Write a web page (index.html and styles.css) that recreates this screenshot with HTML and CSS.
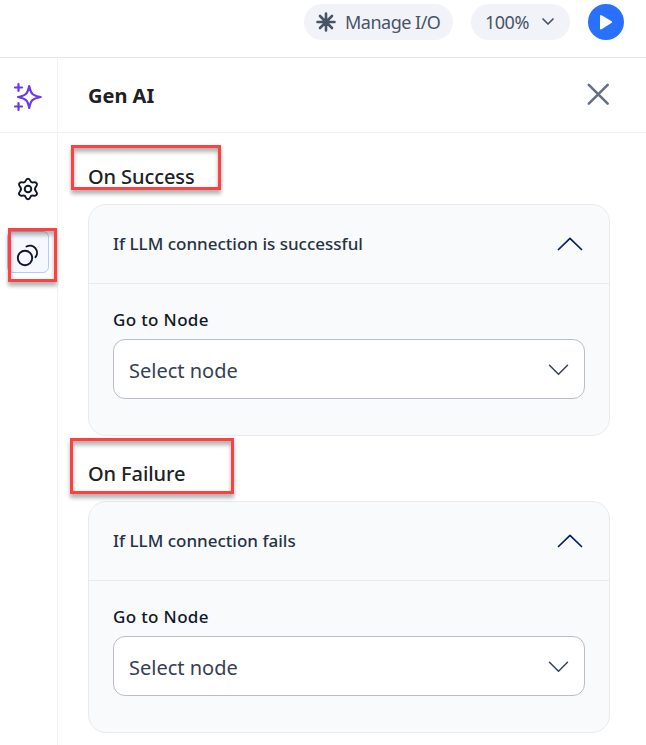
FILE: index.html
```
<!DOCTYPE html>
<html lang="en">
<head>
<meta charset="utf-8">
<title>Gen AI</title>
<link rel="stylesheet" href="styles.css">
</head>
<body>
<header class="topbar">
  <button class="pill manage">
    <svg width="20" height="20" viewBox="0 0 20 20"><path d="M10 1.500v17M1.500 10h17M4 4l12 12M16 4L4 16"/></svg>
    <span>Manage I/O</span>
  </button>
  <button class="pill scale">
    <span>100%</span>
    <svg width="14" height="10" viewBox="0 0 14 10"><path d="M2 2l5 5 5-5"/></svg>
  </button>
  <button class="play" aria-label="Run">
    <svg width="36" height="36" viewBox="0 0 36 36"><path d="M13 12v12.500L23.200 18z"/></svg>
  </button>
</header>
<div class="workspace">
  <nav class="rail">
    <div class="brand">
      <svg width="30" height="30" viewBox="0 0 30 30"><path d="M16.200 4C17.800 11.500 19 13.300 27.700 15C19 16.700 17.800 18.500 16.200 26C14.600 18.500 13.300 16.700 5 15C13.300 13.300 14.600 11.500 16.200 4ZM5.500 2v7M2 5.500h7M5.500 21v7M2 24.500h7"/></svg>
    </div>
    <div class="rail-item">
      <svg width="24" height="24" viewBox="0 0 24 24"><path d="M12 1.800c1.300 0 1.900.8 2.300 2 .5 1.500 1.400 1.900 2.900 1.600 1.500-.4 2.900-.2 3.600 1 .6 1.200.1 2.200-.8 3.200-1.300 1.500-1.300 3.300 0 4.800.9 1 1.400 2 .8 3.200-.7 1.200-2.100 1.400-3.600 1-1.500-.3-2.400.1-2.900 1.600-.4 1.200-1 2-2.300 2s-1.900-.8-2.300-2c-.5-1.500-1.400-1.900-2.900-1.600-1.500.4-2.900.2-3.600-1-.6-1.200-.1-2.200.8-3.200 1.300-1.500 1.300-3.300 0-4.800-.9-1-1.400-2-.8-3.200.7-1.200 2.100-1.400 3.600-1 1.500.3 2.400-.1 2.900-1.600.4-1.200 1-2 2.300-2z"/><circle cx="12" cy="12" r="3.300"/></svg>
    </div>
    <div class="rail-item active">
      <svg width="24" height="26" viewBox="0 0 24 26"><circle cx="9" cy="19" r="7.200"/><path d="M10.500 7.500a7.150 7.150 0 0 1 9 10.700"/></svg>
      <i class="mark mark-rail"></i>
    </div>
  </nav>
  <main class="panel">
    <div class="panel-head">
      <h1>Gen AI</h1>
      <svg class="close" width="24" height="24" viewBox="0 0 24 24"><path d="M2.800 2.800l18.900 18.900M21.700 2.800L2.800 21.700"/></svg>
    </div>
    <section class="group">
      <h2>On Success<i class="mark mark-success"></i></h2>
      <div class="card">
        <div class="card-head"><span>If LLM connection is successful</span>
          <svg width="26" height="16" viewBox="0 0 26 16"><path d="M1.500 13.500L13 2.300l11.500 11.200"/></svg></div>
        <div class="card-body">
          <label>Go to Node</label>
          <div class="select"><span>Select node</span>
            <svg width="20" height="12" viewBox="0 0 20 12"><path d="M1.500 1.200l9 9 9-9"/></svg></div>
        </div>
      </div>
    </section>
    <section class="group">
      <h2>On Failure<i class="mark mark-failure"></i></h2>
      <div class="card">
        <div class="card-head"><span>If LLM connection fails</span>
          <svg width="26" height="16" viewBox="0 0 26 16"><path d="M1.500 13.500L13 2.300l11.500 11.200"/></svg></div>
        <div class="card-body">
          <label>Go to Node</label>
          <div class="select"><span>Select node</span>
            <svg width="20" height="12" viewBox="0 0 20 12"><path d="M1.500 1.200l9 9 9-9"/></svg></div>
        </div>
      </div>
    </section>
  </main>
</div>
</body>
</html>
```
FILE: styles.css
```
* { box-sizing: border-box; }
body {
  margin: 0;
  height: 745px;
  overflow: hidden;
  background: #fff;
  color: #202124;
  font-family: "Noto Sans", "Open Sans", sans-serif;
}
svg { flex: none; overflow: visible; fill: none; stroke: currentColor; stroke-linecap: round; stroke-linejoin: round; }
h1, h2 { margin: 0; }
button { border: 0; font: inherit; padding: 0; }
span, label, h1 { white-space: nowrap; }

.topbar {
  display: flex;
  justify-content: flex-end;
  gap: 18px;
  height: 58px;
  padding: 4px 22px 0 0;
  border-bottom: 1px solid #e8e8eb;
}
.pill {
  display: flex;
  align-items: center;
  height: 36px;
  border-radius: 18px;
  background: #f2f3f8;
  color: #475467;
}
.manage { width: 149px; padding-left: 12px; gap: 9px; font-size: 18px; letter-spacing: -.5px; }
.manage svg { stroke-width: 2.6; }
.scale { width: 99px; padding-left: 14px; gap: 12px; font-size: 18px; letter-spacing: -.5px; }
.scale svg { stroke-width: 1.7; }
.play { width: 36px; height: 36px; border-radius: 50%; background: #2970ff; color: #fff; }
.play svg { display: block; fill: currentColor; stroke-width: 2; }

.workspace { display: flex; height: 687px; }
.rail { width: 58px; flex: none; border-right: 1px solid #f1f1f4; }
.brand {
  height: 75px;
  padding: 24px 0 0 13px;
  border-bottom: 1px solid #f1f1f4;
  color: #6938ef;
}
.brand svg { display: block; stroke-width: 2.2; }
.rail-item {
  position: relative;
  display: flex;
  align-items: center;
  justify-content: center;
  width: 42px;
  height: 42px;
  margin: 35px 0 0 7px;
  color: #101828;
}
.rail-item svg { stroke-width: 1.9; }
.rail-item + .rail-item { margin-top: 21px; }
.active { border: 1px solid #b2ccff; border-radius: 6px; background: #f5f8ff; }

.panel { flex: 1; }
.panel-head {
  display: flex;
  align-items: center;
  justify-content: space-between;
  height: 75px;
  padding: 0 36px 2px 30px;
  border-bottom: 1px solid #f1f1f4;
}
.close { color: #667085; stroke-width: 2.6; }
h1 { padding-top: 2px; font-size: 20px; font-weight: 700; }
.group { width: 522px; margin-left: 30px; }
.group h2 {
  position: relative;
  height: 65px;
  padding-top: 24px;
  font-size: 20px;
  line-height: 28px;
  font-weight: 500;
  letter-spacing: -.1px;
}
.group:nth-of-type(1) h2 { height: 71px; padding-top: 30px; }
.card { height: 232px; border: 1px solid #e8eaee; border-radius: 18px; background: #f9fafc; }
.card-head {
  display: flex;
  align-items: center;
  justify-content: space-between;
  height: 79px;
  padding: 0 26px 0 24px;
  border-bottom: 1px solid #e8eaee;
  color: #273344;
  font-size: 17px;
  font-weight: 500;
}
.card-head span { padding-bottom: 2px; }
.card-head svg { color: #00205f; stroke-width: 1.7; }
.card-body { padding: 23px 24px 0; color: #101828; }
.card-body label { display: block; height: 32px; line-height: 26px; font-size: 17px; font-weight: 500; letter-spacing: .35px; }
.select {
  display: flex;
  align-items: center;
  justify-content: space-between;
  height: 60px;
  padding: 2px 16px 0 15px;
  border: 1px solid #b9bdc7;
  border-radius: 12px;
  background: #fff;
  color: #344054;
  font-size: 20px;
}
.select svg { stroke-width: 1.5; }

.mark {
  position: absolute;
  border: 3px solid #ff4040;
  box-shadow: 0 4px 4px rgba(0, 0, 0, .3), inset 0 4px 4px rgba(0, 0, 0, .3);
}
.mark-rail { left: 0; top: -4px; width: 49px; height: 54px; }
.mark-success { left: -17px; top: 12px; width: 150px; height: 45px; }
.mark-failure { left: -18px; top: 2px; width: 164px; height: 56px; }
```
